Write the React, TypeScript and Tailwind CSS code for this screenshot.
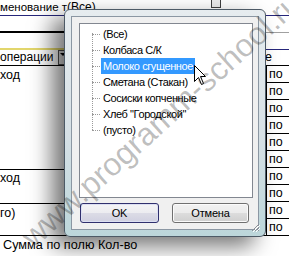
import React from 'react';

const items = ['(Все)', 'Колбаса С/К', 'Молоко сгущенное', 'Сметана (Стакан)', 'Сосиски копченные', 'Хлеб "Городской"', '(пусто)'];
const poRows = [0, 1, 2, 3, 4, 5, 6, 7, 8, 9];

export default function App() {
  return (
    <div className="relative w-[289px] h-[256px] overflow-hidden bg-white text-black font-['Liberation_Sans',Arial,sans-serif]">
      {/* spreadsheet */}
      <div className="flex flex-col w-[289px] h-[256px] text-[12.5px] leading-[15px]">
        <div className="h-[16px] shrink-0 flex items-start border-b border-[#26267a]">
          <div className="w-[67px] shrink-0 text-[11.5px] leading-[15px] whitespace-nowrap">менование т</div>
          <div className="w-[144px] shrink-0 text-[12px] leading-[15px]">(Все)</div>
          <div className="w-[10px] h-[8px] shrink-0 border-x border-b border-[#404040] bg-[#ececec]"></div>
        </div>
        <div className="h-[17px] shrink-0 flex">
          <div className="w-[266px] shrink-0 border-b-2 border-black"></div>
          <div className="flex-1 border-b border-[#a0a0a0]"></div>
        </div>
        <div className="h-[17px] shrink-0 flex">
          <div className="w-[266px] shrink-0 border-b-2 border-[#e2d66c]"></div>
          <div className="flex-1 border-b border-[#26267a]"></div>
        </div>
        <div className="h-[16px] shrink-0 flex border-b border-black">
          <div className="w-[265px] shrink-0 flex items-start">
            <div className="w-[58px] shrink-0 text-[12px] whitespace-nowrap">операции</div>
            <div className="w-[9px] h-[15px] shrink-0 border border-[#505050] bg-[#e6e6e6] flex justify-center pt-[2px]">
              <div className="w-0 h-0 border-x-[3px] border-x-transparent border-t-[3px] border-t-black"></div>
            </div>
          </div>
          <div className="flex-1 whitespace-nowrap">е</div>
        </div>
        <div className="h-[169px] shrink-0 flex">
          <div className="w-[266px] shrink-0 flex flex-col">
            <div className="h-[104px] shrink-0 border-b border-black pt-[2px]">ход</div>
            <div className="h-[34px] shrink-0 border-b border-black pt-[1px]">ход</div>
            <div className="flex-1 pt-[2px]">го)</div>
          </div>
          <div className="flex-1 flex flex-col border-l border-black">
            {poRows.map((i) => (
              <div key={i} className={`h-[17px] shrink-0 pl-[2px] pt-[1px] ${i < 9 ? 'border-b border-black' : ''}`}>
                по
              </div>
            ))}
          </div>
        </div>
        <div className="flex-1 border-t border-black pl-[3px] pt-[2px] text-[12.7px] whitespace-nowrap">Сумма по полю Кол-во</div>
      </div>

      {/* dialog */}
      <div className="absolute left-[64px] top-[9px] w-[202px] h-[228px] rounded-[6px] border border-[#4d5a66] bg-[linear-gradient(180deg,#e6ecef_0%,#d6e0e5_55%,#bcd6da_100%)] p-[6px] shadow-[-12px_9px_22px_rgba(0,0,0,0.55)] text-[11px] tracking-[-0.4px]">
        <div className="w-full h-full border border-[#8b97a3] bg-[#f0f0f0] flex flex-col pt-[6px] pl-[7px] pr-[5px]">
          <div className="relative h-[175px] shrink-0 border border-[#828790] bg-white pt-[2px]">
            <div className="absolute left-[12px] top-[9px] h-[97px] border-l border-dotted border-[#9a9a9a]"></div>
            {items.map((t, i) => (
              <div key={t} className="h-[16px] flex items-center">
                <div className="w-[12px] shrink-0"></div>
                <div className="w-[8px] shrink-0 border-t border-dotted border-[#9a9a9a]"></div>
                <div className="w-[1px] shrink-0"></div>
                <div
                  className={`h-[16px] flex items-center px-[2px] whitespace-nowrap ${
                    i === 2 ? 'bg-[#3399ff] text-white' : ''
                  }`}
                >
                  {t}
                </div>
              </div>
            ))}
          </div>
          <div className="flex pt-[5px] pl-[1px] gap-[13px]">
            <button className="w-[79px] h-[20px] rounded-[3px] border border-[#30306e] bg-[linear-gradient(180deg,#f4f4f6_0%,#ececf0_50%,#dcdce6_50%,#d0d0e0_100%)] shadow-[inset_0_0_0_1px_#dcdff2] text-[11px] tracking-[-0.2px] leading-[18px] text-black">
              OK
            </button>
            <button className="w-[77px] h-[20px] rounded-[3px] border border-[#707070] bg-[linear-gradient(180deg,#f2f2f2_0%,#ebebeb_50%,#dddddd_50%,#cfcfcf_100%)] shadow-[inset_0_0_0_1px_#fbfbfb] text-[11px] tracking-[-0.2px] leading-[18px] text-black">
              Отмена
            </button>
          </div>
        </div>
        <svg className="absolute right-[5px] bottom-[4px]" width="10" height="10" viewBox="0 0 10 10">
          <path d="M9 2 L2 9 M9 5 L5 9 M9 8 L8 9" stroke="#8a8f96" strokeWidth="1" />
          <path d="M10 3 L3 10 M10 6 L6 10" stroke="#ffffff" strokeWidth="1" />
        </svg>
      </div>

      {/* watermark */}
      <div className="absolute left-[37px] top-[221px] h-[32px] origin-bottom-left rotate-[-42deg] text-[32px] leading-none whitespace-nowrap text-[rgba(0,0,0,0.26)] pointer-events-none">
        www.programm-school.ru
      </div>

      {/* cursor */}
      <svg className="absolute left-[194px] top-[65px]" width="13" height="21" viewBox="0 0 13 21">
        <path d="M0.5 0.5 L0.5 16.5 L4.5 12.5 L7.5 19.5 L9.5 18.5 L6.5 11.5 L11.5 11.5 Z" fill="white" stroke="black" strokeWidth="1" />
      </svg>
    </div>
  );
}
